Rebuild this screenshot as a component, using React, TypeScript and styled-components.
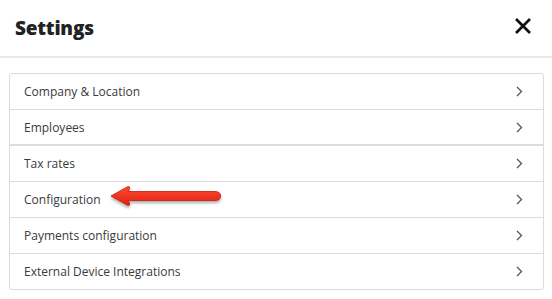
import React from 'react'
import styled, { createGlobalStyle } from 'styled-components'

const GlobalStyle = createGlobalStyle`
  html, body {
    margin: 0;
    padding: 0;
    background: #ffffff;
  }
  body {
    font-family: "Open Sans", "Liberation Sans", sans-serif;
    color: #333;
  }
`;

const Page = styled.div`
  width: 552px;
  height: 299px;
  position: relative;
  overflow: hidden;
  background: #fff;
`;

const Header = styled.div`
  display: flex;
  align-items: center;
  justify-content: space-between;
  padding: 0 20px 0 15px;
  border-bottom: 2px solid #e9e9e9;
  box-sizing: border-box;
  height: 58px;
`;

const Title = styled.h1`
  margin: 0;
  font-family: "Open Sans", sans-serif;
  font-weight: 800;
  font-size: 19px;
  letter-spacing: -0.2px;
  color: #222;
`;

const CloseButton = styled.button`
  border: none;
  background: none;
  padding: 0;
  margin-bottom: 4px;
  width: 18px;
  height: 18px;
  display: flex;
  cursor: pointer;
`;

const Body = styled.div`
  padding: 15px 8px 0 9px;
`;

const List = styled.div`
  border: 1px solid #dcdcdc;
  border-radius: 3px;
  display: flex;
  flex-direction: column;
`;

const Row = styled.div<{ $thick?: boolean; $last?: boolean }>`
  height: ${p => (p.$thick ? '34px' : '35px')};
  display: flex;
  align-items: center;
  justify-content: space-between;
  padding: 0 20px 0 14px;
  border-bottom: ${p => (p.$last ? 'none' : p.$thick ? '2px solid #dcdcdc' : '1px solid #dcdcdc')};
  font-size: 12px;
  color: #3a3a3a;
  cursor: pointer;
`;

const Chevron = () => (
  <svg width="7" height="11" viewBox="0 0 7 11">
    <path d="M1 1 L5.5 5.5 L1 10" fill="none" stroke="#555" strokeWidth="1.3" />
  </svg>
);

const Arrow = styled.svg`
  position: absolute;
  left: 108px;
  top: 183px;
`;

const items = [
  'Company & Location',
  'Employees',
  'Tax rates',
  'Configuration',
  'Payments configuration',
  'External Device Integrations',
];

export default function App() {
  return (
    <Page>
      <GlobalStyle />
      <Header>
        <Title>Settings</Title>
        <CloseButton aria-label="close">
          <svg width="18" height="18" viewBox="0 0 18 18">
            <path d="M2 2 L16 16 M16 2 L2 16" stroke="#111" strokeWidth="2.8" strokeLinecap="butt" />
          </svg>
        </CloseButton>
      </Header>
      <Body>
        <List>
          {items.map((label, i) => (
            <Row key={label} $thick={i === 1} $last={i === items.length - 1}>
              <span>{label}</span>
              <Chevron />
            </Row>
          ))}
        </List>
      </Body>
      <Arrow width="118" height="28" viewBox="0 0 118 28">
        <defs>
          <linearGradient id="arrowFill" x1="0" y1="0" x2="0" y2="1">
            <stop offset="0" stopColor="#ff4a33" />
            <stop offset="1" stopColor="#e02010" />
          </linearGradient>
          <filter id="arrowShadow" x="-10%" y="-40%" width="120%" height="200%">
            <feDropShadow dx="0" dy="2" stdDeviation="1.5" floodColor="#000" floodOpacity="0.35" />
          </filter>
        </defs>
        <path
          d="M3 13 L20 3.5 Q22 3 21.5 6 L20 8.5 L107 8.5 Q112.5 8.5 112.5 13 Q112.5 17.5 107 17.5 L20 17.5 L21.5 20 Q22 23 20 22.5 Z"
          fill="url(#arrowFill)"
          stroke="#c41a0c"
          strokeWidth="0.8"
          strokeLinejoin="round"
          filter="url(#arrowShadow)"
        />
      </Arrow>
    </Page>
  );
}
